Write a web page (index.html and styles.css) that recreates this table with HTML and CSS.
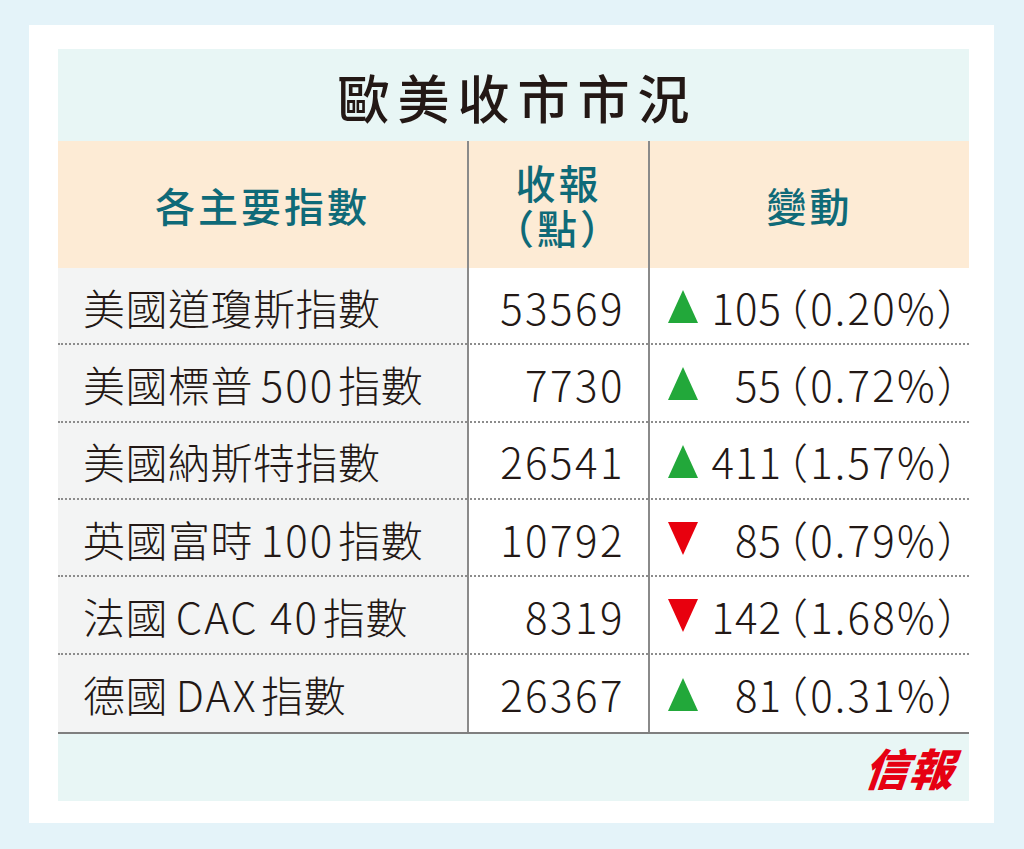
FILE: index.html
```html
<!DOCTYPE html>
<html lang="zh-Hant">
<head>
<meta charset="utf-8">
<title>歐美收市市況</title>
<link rel="stylesheet" href="styles.css">
</head>
<body>
<div class="card">
  <div class="panel">
    <div class="title">歐美收市市況</div>
    <div class="table">
      <div class="hcell c1">各主要指數</div>
      <div class="hcell c2"><div class="two">收報<br>（點）</div></div>
      <div class="hcell c3">變動</div>

      <div class="cell name">美國道瓊斯指數</div>
      <div class="cell close">53569</div>
      <div class="cell chg"><svg class="tri" viewBox="0 0 30 33"><polygon points="15,0 30,33 0,33" fill="#22a83a"/></svg><span class="num">105</span><span class="pct">（0.20%）</span></div>

      <div class="cell name">美國標普 <span class="lat">500</span>指數</div>
      <div class="cell close">7730</div>
      <div class="cell chg"><svg class="tri" viewBox="0 0 30 33"><polygon points="15,0 30,33 0,33" fill="#22a83a"/></svg><span class="num">55</span><span class="pct">（0.72%）</span></div>

      <div class="cell name">美國納斯特指數</div>
      <div class="cell close">26541</div>
      <div class="cell chg"><svg class="tri" viewBox="0 0 30 33"><polygon points="15,0 30,33 0,33" fill="#22a83a"/></svg><span class="num">411</span><span class="pct">（1.57%）</span></div>

      <div class="cell name">英國富時 <span class="lat">100</span>指數</div>
      <div class="cell close">10792</div>
      <div class="cell chg"><svg class="tri" viewBox="0 0 30 33"><polygon points="0,0 30,0 15,33" fill="#e8000e"/></svg><span class="num">85</span><span class="pct">（0.79%）</span></div>

      <div class="cell name">法國 <span class="lat">CAC 40</span>指數</div>
      <div class="cell close">8319</div>
      <div class="cell chg"><svg class="tri" viewBox="0 0 30 33"><polygon points="0,0 30,0 15,33" fill="#e8000e"/></svg><span class="num">142</span><span class="pct">（1.68%）</span></div>

      <div class="cell name last">德國 <span class="lat">DAX</span>指數</div>
      <div class="cell close last">26367</div>
      <div class="cell chg last"><svg class="tri" viewBox="0 0 30 33"><polygon points="15,0 30,33 0,33" fill="#22a83a"/></svg><span class="num">81</span><span class="pct">（0.31%）</span></div>
    </div>
    <div class="footer"><span class="logo">信報</span></div>
  </div>
</div>
</body>
</html>
```

FILE: styles.css
```css
html, body {
  margin: 0;
  padding: 0;
}
body {
  background: #e4f3f9;
  width: 1024px;
  height: 849px;
  overflow: hidden;
  font-family: "Noto Sans CJK TC", "Noto Sans", sans-serif;
}
.card {
  margin: 25px 0 0 29px;
  width: 965px;
  height: 798px;
  background: #ffffff;
  box-sizing: border-box;
  padding: 24px 25px 21px 29px;
}
.panel {
  width: 911px;
  display: flex;
  flex-direction: column;
}
.title {
  height: 92px;
  background: #e8f6f5;
  display: flex;
  align-items: center;
  justify-content: center;
  font-size: 52px;
  font-weight: 500;
  letter-spacing: 8px;
  padding-left: 8px;
  color: #231815;
  line-height: 1;
  padding-top: 4px;
  box-sizing: border-box;
}
.table {
  display: grid;
  grid-template-columns: 409px 181px 321px;
  grid-template-rows: 127px repeat(6, 77.33px);
  border-bottom: 2px solid #7f7f7f;
}
.hcell {
  background: #fdebd5;
  color: #0f6a78;
  font-size: 40px;
  font-weight: 500;
  letter-spacing: 3px;
  display: flex;
  align-items: center;
  justify-content: center;
  line-height: 1;
}
.two {
  line-height: 45px;
  text-align: center;
  font-feature-settings: "halt" 1;
}
.c2, .c3, .close, .chg {
  border-left: 2px solid #8a8a8a;
}
.cell {
  border-bottom: 2px dotted #8c8c8c;
  box-sizing: border-box;
  display: flex;
  align-items: center;
  font-size: 42px;
  font-weight: 300;
  color: #231815;
  line-height: 1;
  padding-top: 2px;
  white-space: pre;
}
.cell.last {
  border-bottom: none;
}
.name {
  background: #f3f4f4;
  padding-left: 25px;
  letter-spacing: 0.5px;
  word-spacing: -2px;
}
.lat {
  letter-spacing: 2px;
  word-spacing: 0;
  margin-right: 4px;
}
.close {
  justify-content: flex-end;
  padding-right: 23px;
  letter-spacing: 2.5px;
}
.chg {
  padding-left: 18px;
}
.tri {
  width: 30px;
  height: 33px;
  flex: none;
}
.num {
  width: 84px;
  text-align: right;
  flex: none;
  letter-spacing: 1px;
}
.pct {
  font-feature-settings: "halt" 1;
  letter-spacing: 2.2px;
  margin-left: 5px;
}
.footer {
  height: 67px;
  background: #e8f6f5;
  display: flex;
  align-items: center;
  justify-content: flex-end;
  padding-right: 14px;
}
.logo {
  color: #e60012;
  font-size: 44px;
  font-weight: 900;
  font-style: italic;
  letter-spacing: 1px;
  line-height: 1;
  transform: skewX(-6deg);
}
```
